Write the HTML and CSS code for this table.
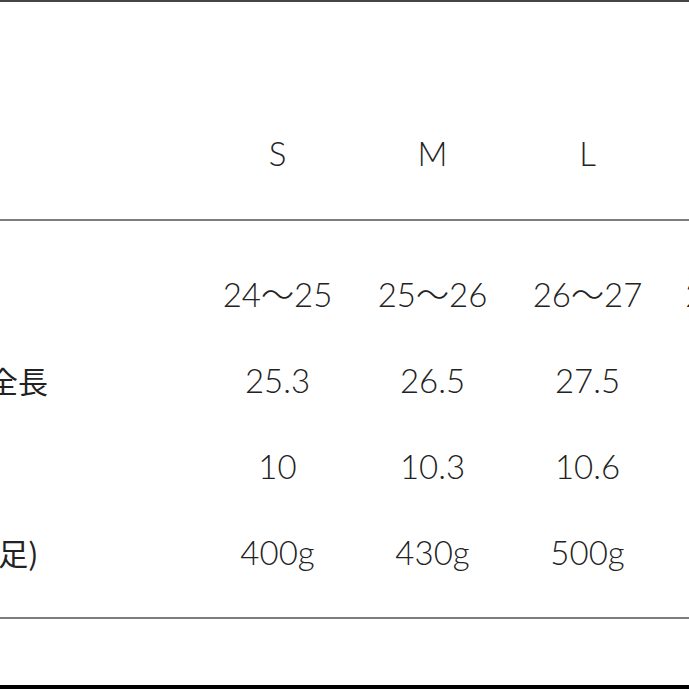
FILE: index.html
```html
<!DOCTYPE html>
<html lang="ja">
<head>
<meta charset="utf-8">
<title>サイズ表</title>
<link rel="stylesheet" href="styles.css">
</head>
<body>
<div class="sheet">
  <div class="table">
    <div class="head">
      <div class="row">
        <div class="label"></div>
        <div class="cell">S</div>
        <div class="cell">M</div>
        <div class="cell">L</div>
        <div class="cell">LL</div>
      </div>
    </div>
    <div class="body">
      <div class="row">
        <div class="label">サイズ</div>
        <div class="cell">24〜25</div>
        <div class="cell">25〜26</div>
        <div class="cell">26〜27</div>
        <div class="cell">27〜28</div>
      </div>
      <div class="row">
        <div class="label">ソール全長</div>
        <div class="cell">25.3</div>
        <div class="cell">26.5</div>
        <div class="cell">27.5</div>
        <div class="cell">28.5</div>
      </div>
      <div class="row">
        <div class="label">横幅</div>
        <div class="cell">10</div>
        <div class="cell">10.3</div>
        <div class="cell">10.6</div>
        <div class="cell">10.9</div>
      </div>
      <div class="row">
        <div class="label">重量(片足)</div>
        <div class="cell">400g</div>
        <div class="cell">430g</div>
        <div class="cell">500g</div>
        <div class="cell">530g</div>
      </div>
    </div>
  </div>
  <div class="foot"></div>
</div>
</body>
</html>
```

FILE: styles.css
```css
html, body {
  margin: 0;
  padding: 0;
  background: #ffffff;
}
body {
  width: 689px;
  height: 689px;
  overflow: hidden;
}
.sheet {
  width: 689px;
  height: 689px;
  display: flex;
  flex-direction: column;
  border-top: 2px solid #454545;
  box-sizing: border-box;
  overflow: hidden;
  color: #222222;
  font-family: Lato, "Noto Sans CJK JP", sans-serif;
  font-weight: 300;
}
.table {
  margin-left: -102px;
  width: 920px;
}
.head {
  height: 219px;
  box-sizing: border-box;
  padding-top: 108px;
  border-bottom: 2px solid #7d7d7d;
}
.body {
  padding-top: 30px;
  height: 398px;
  box-sizing: border-box;
  border-bottom: 2px solid #7d7d7d;
}
.row {
  display: grid;
  grid-template-columns: 302px 155px 155px 155px 150px;
  height: 86px;
  align-items: center;
}
.cell {
  text-align: center;
  font-size: 33px;
  line-height: 86px;
  white-space: nowrap;
}
.label {
  font-family: "Noto Sans CJK JP", sans-serif;
  font-weight: 400;
  font-size: 30px;
  line-height: 86px;
  white-space: nowrap;
}
.foot {
  flex: 1;
  border-bottom: 4px solid #000000;
}
```
